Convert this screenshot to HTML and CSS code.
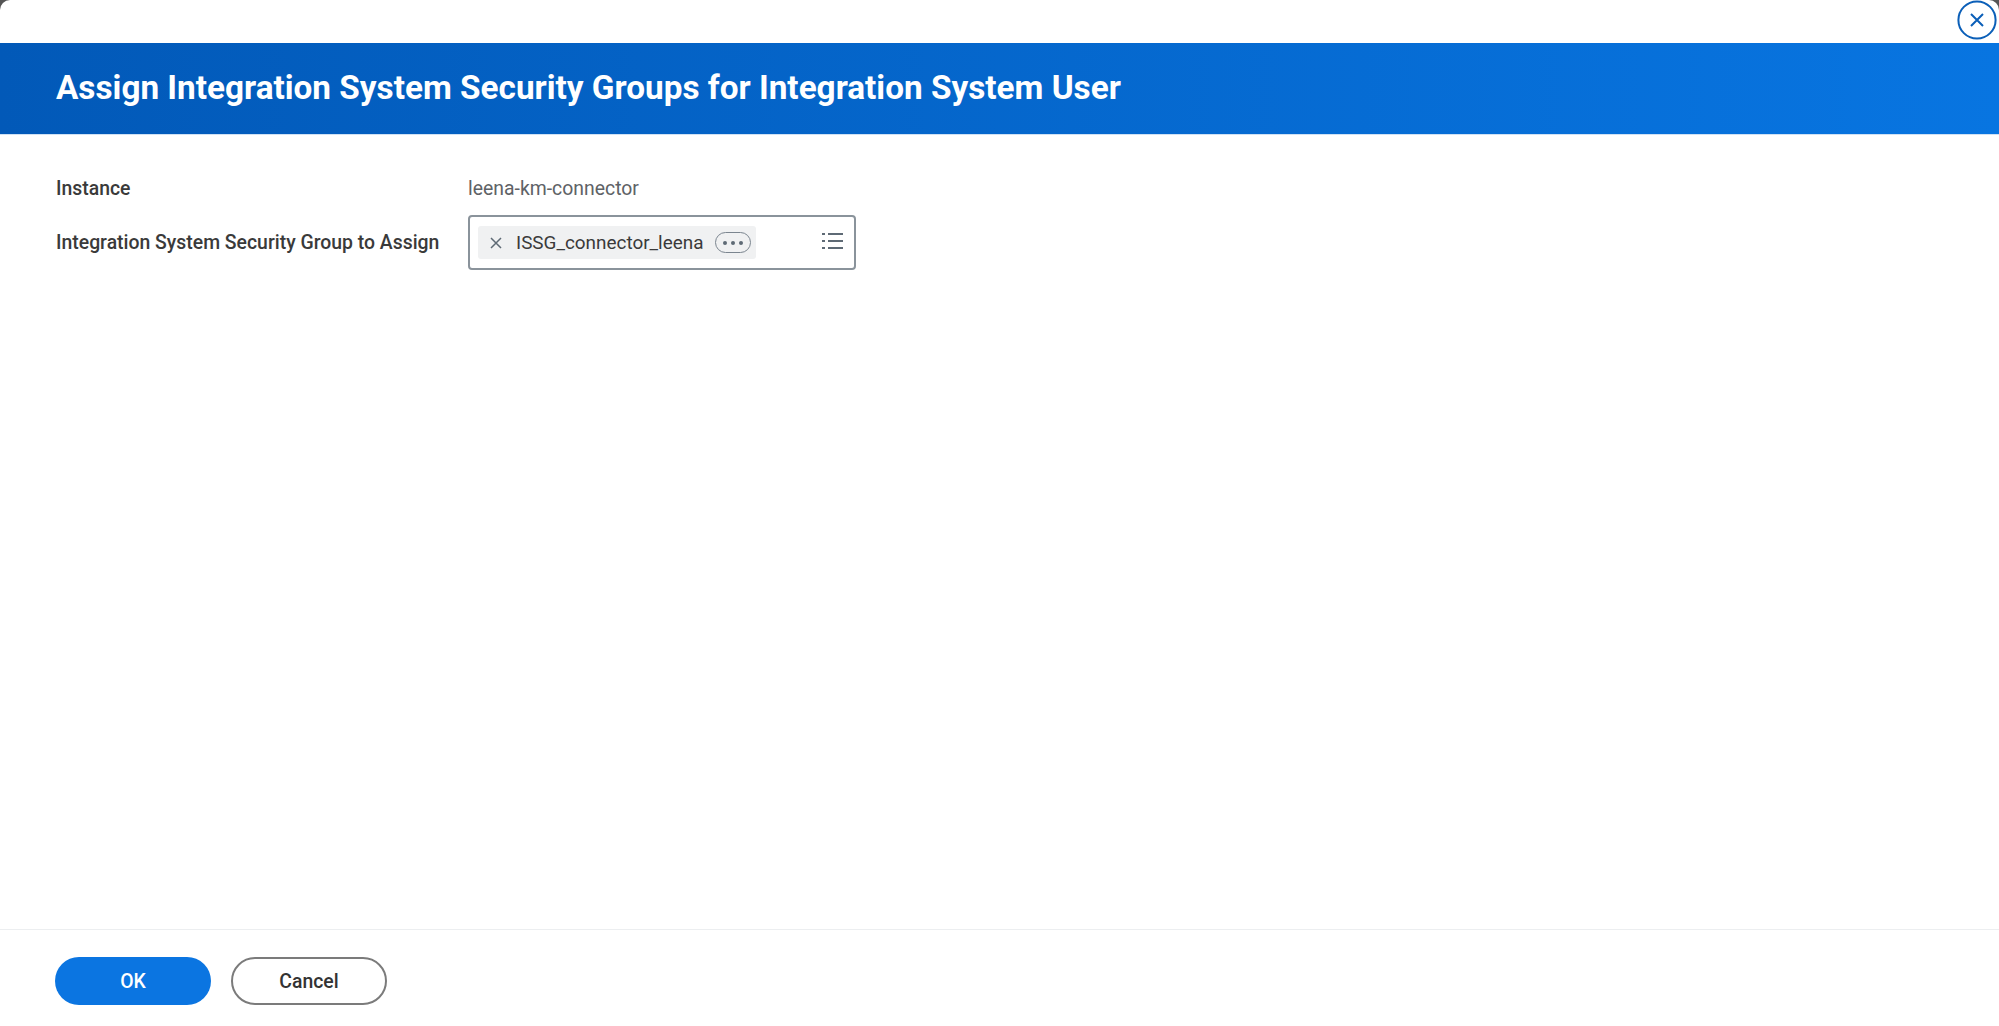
FILE: index.html
```html
<!DOCTYPE html>
<html lang="en">
<head>
    <meta charset="UTF-8">
    <meta name="viewport" content="width=device-width, initial-scale=1.0">
    <title>Assign Integration System Security Groups for Integration System User</title>
    <link rel="stylesheet" href="styles.css">
</head>
<body>
    <div class="modal">
        <button type="button" class="close-btn" aria-label="Close">
            <svg width="40" height="40" viewBox="0 0 40 40" fill="none" stroke="#0b5fb8">
                <circle cx="20" cy="20" r="18.6" stroke-width="2"/>
                <path d="M14 14L26 26M26 14L14 26" stroke-width="2"/>
            </svg>
        </button>
        <div class="modal-top"></div>
        <header class="title-bar">
            <h1>Assign Integration System Security Groups for Integration System User</h1>
        </header>
        <main class="form-area">
            <div class="form-row">
                <label class="form-label">Instance</label>
                <div class="form-value">leena-km-connector</div>
            </div>
            <div class="form-row">
                <label class="form-label">Integration System Security Group to Assign</label>
                <div class="prompt-box">
                    <div class="chip">
                        <svg class="chip-x" width="12" height="12" viewBox="0 0 12 12" fill="none" stroke="#5e6a75" stroke-width="1.5">
                            <path d="M1 1L11 11M11 1L1 11"/>
                        </svg>
                        <span class="chip-text">ISSG_connector_leena</span>
                        <span class="chip-more"><i></i><i></i><i></i></span>
                    </div>
                    <svg class="list-icon" width="21" height="18" viewBox="0 0 21 18" fill="#5e6a75">
                        <rect x="0" y="1" width="3" height="2"/>
                        <rect x="6" y="1" width="15" height="2"/>
                        <rect x="0" y="8" width="3" height="2"/>
                        <rect x="6" y="8" width="15" height="2"/>
                        <rect x="0" y="15" width="3" height="2"/>
                        <rect x="6" y="15" width="15" height="2"/>
                    </svg>
                </div>
            </div>
        </main>
        <footer class="action-bar">
            <button type="button" class="btn btn-primary">OK</button>
            <button type="button" class="btn btn-secondary">Cancel</button>
        </footer>
    </div>
</body>
</html>
```

FILE: styles.css
```css
body, html {
    margin: 0;
    padding: 0;
    height: 100%;
    font-family: 'Roboto', 'Liberation Sans', sans-serif;
    background-color: #555;
    overflow: hidden;
}
.modal {
    position: relative;
    display: flex;
    flex-direction: column;
    height: 100%;
    background-color: #fff;
    border-radius: 10px 10px 0 0;
}
.modal-top {
    height: 43px;
    flex-shrink: 0;
}
.close-btn {
    position: absolute;
    top: 0;
    right: 2px;
    width: 40px;
    height: 40px;
    padding: 0;
    border: none;
    background: none;
    cursor: pointer;
}
.close-btn svg {
    display: block;
}
.title-bar {
    display: flex;
    align-items: center;
    height: 92px;
    padding: 0 0 3px 56px;
    box-sizing: border-box;
    flex-shrink: 0;
    background: linear-gradient(90deg, #0259b8 0%, #0875e1 100%);
    border-bottom: 1px solid #cfe1f4;
}
.title-bar h1 {
    margin: 0;
    color: #fff;
    font-size: 33.3px;
    font-weight: 700;
}
.form-area {
    flex: 1;
    padding: 42px 56px 0;
}
.form-row {
    display: flex;
    align-items: center;
    margin-bottom: 15px;
}
.form-label {
    width: 412px;
    color: #3a3a3a;
    font-size: 19.4px;
    font-weight: 500;
}
.form-value {
    color: #5e6266;
    font-size: 19.4px;
}
.prompt-box {
    display: flex;
    align-items: center;
    justify-content: space-between;
    box-sizing: border-box;
    width: 388px;
    height: 55px;
    padding: 0 11px 0 8px;
    border: 2px solid #8a939b;
    border-radius: 4px;
}
.chip {
    display: flex;
    align-items: center;
    height: 33px;
    padding: 0 5px 0 12px;
    background-color: #f0f1f2;
    border-radius: 3px;
}
.chip-text {
    margin-left: 14px;
    color: #3a3a3a;
    font-size: 18.9px;
}
.chip-more {
    display: flex;
    align-items: center;
    justify-content: center;
    gap: 4px;
    width: 36px;
    height: 21px;
    margin-left: 12px;
    box-sizing: border-box;
    border: 1px solid #7b858f;
    border-radius: 11px;
}
.chip-more i {
    width: 4px;
    height: 4px;
    border-radius: 50%;
    background-color: #5e6a75;
}
.list-icon {
    margin-bottom: 3px;
}
.action-bar {
    display: flex;
    gap: 20px;
    height: 97px;
    box-sizing: border-box;
    padding: 27px 55px 0;
    flex-shrink: 0;
    border-top: 1px solid #eceef0;
}
.btn {
    width: 156px;
    height: 48px;
    border-radius: 24px;
    font-family: inherit;
    font-size: 19.4px;
    font-weight: 500;
    cursor: pointer;
}
.btn-primary {
    background-color: #0b75e1;
    border: none;
    color: #fff;
}
.btn-secondary {
    background-color: #fff;
    border: 2px solid #7b7b7b;
    color: #333;
}
```
